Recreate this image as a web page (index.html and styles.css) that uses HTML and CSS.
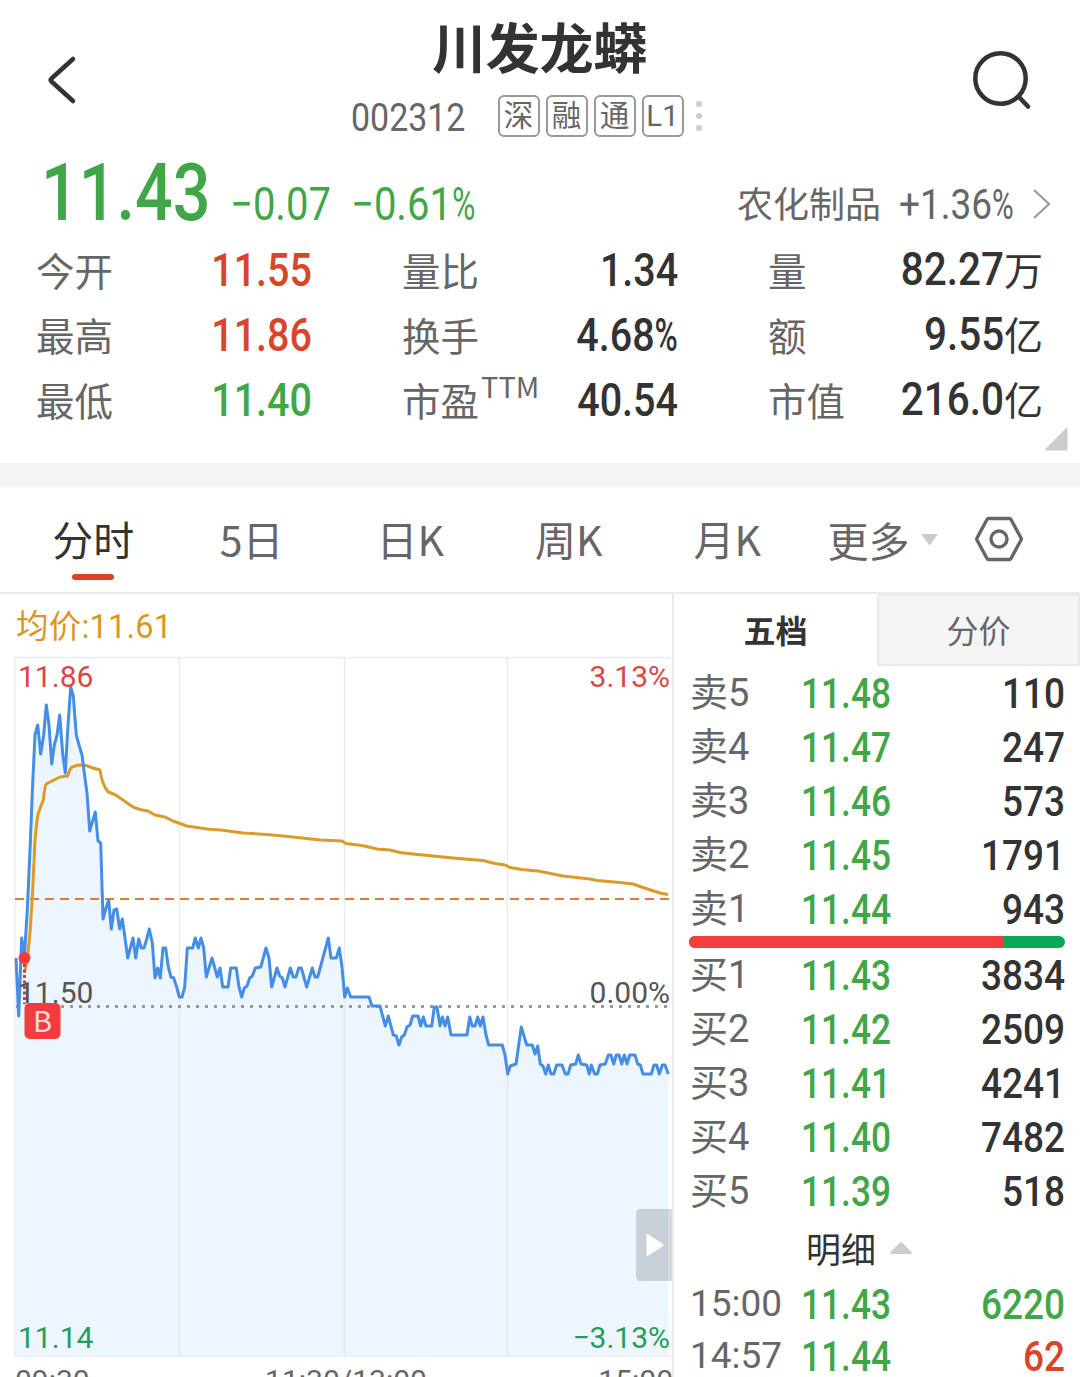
FILE: index.html
```html
<!DOCTYPE html>
<html lang="zh-CN">
<head>
  <meta charset="UTF-8" />
  <meta name="viewport" content="width=device-width, initial-scale=1.0"/>
  <title>川发龙蟒 002312</title>
  <link rel="stylesheet" href="styles.css">
</head>
<body>

<header class="header">
  <svg class="back" width="40" height="56" viewBox="0 0 40 56"><path d="M31 7 L9.500 26.500 Q8 28 9.500 29.500 L31 49"/></svg>
  <div class="stock">
    <h1>川发龙蟒</h1>
    <div class="stock-sub">
      <span class="code"><span class="num">002312</span></span>
      <span class="tag">深</span>
      <span class="tag">融</span>
      <span class="tag">通</span>
      <span class="tag">L1</span>
      <span class="dots"><i></i><i></i><i></i></span>
    </div>
  </div>
  <svg class="search" width="64" height="64" viewBox="0 0 64 64"><circle cx="32.500" cy="30.500" r="25.200"/><path d="M51 49 L60 58.500"/></svg>
</header>

<section class="quote">
  <div class="price-row">
    <span class="price down"><span class="num">11.43</span></span>
    <span class="change down"><span class="num">−0.07</span></span>
    <span class="percent down"><span class="num">−0.61<i class="pct">%</i></span></span>
    <a class="sector">
      <span>农化制品</span>
      <span class="sector-val"><span class="num">+1.36<i class="pct">%</i></span></span>
      <svg width="20" height="32" viewBox="0 0 20 32"><path d="M2 2 L17 16 L2 30"/></svg>
    </a>
  </div>
  <div class="stats">
    <div class="stat"><span>今开</span><b class="num up">11.55</b></div>
    <div class="stat"><span>量比</span><b class="num">1.34</b></div>
    <div class="stat"><span>量</span><b><span class="num">82.27</span><em>万</em></b></div>
    <div class="stat"><span>最高</span><b class="num up">11.86</b></div>
    <div class="stat"><span>换手</span><b class="num">4.68<i class="pct">%</i></b></div>
    <div class="stat"><span>额</span><b><span class="num">9.55</span><em>亿</em></b></div>
    <div class="stat"><span>最低</span><b class="num down">11.40</b></div>
    <div class="stat"><span>市盈<sup>TTM</sup></span><b class="num">40.54</b></div>
    <div class="stat"><span>市值</span><b><span class="num">216.0</span><em>亿</em></b></div>
  </div>
  <svg class="corner" width="24" height="24" viewBox="0 0 24 24"><path d="M23.500 1.500 V22 Q23.500 23.500 22 23.500 H2 Q0 23.500 1.500 22 L22 1 Q23.500 0 23.500 1.500 Z"/></svg>
</section>

<nav class="tabs">
  <a class="tab active">分时</a>
  <a class="tab">5日</a>
  <a class="tab">日K</a>
  <a class="tab">周K</a>
  <a class="tab">月K</a>
  <a class="tab more">更多<svg width="18" height="12" viewBox="0 0 18 12"><path d="M0 0 H17 L8.500 11.500 Z"/></svg></a>
  <svg class="setting" width="50" height="48" viewBox="0 0 50 48"><path d="M14.500 3.500 H35.500 Q36.500 3.500 37 4.500 L47 23 Q47.500 24 47 25 L37 43.500 Q36.500 44.500 35.500 44.500 H14.500 Q13.500 44.500 13 43.500 L3 25 Q2.500 24 3 23 L13 4.500 Q13.500 3.500 14.500 3.500 Z"/><circle cx="25" cy="24" r="8"/></svg>
</nav>

<main class="main">
  <div class="chart">
    <svg width="672" height="783" viewBox="0 594 672 783">
      <!-- price area -->
      <path class="area" d="M16 958 L18.700 1016 21.700 938 24.300 958 27.300 910 30 850 32.700 783 35 735 37.700 725 40.700 754 43.700 735 46.300 705 49 725 51.700 764 54.300 745 57 735 59.700 715 62.700 754 65.300 773 68 725 70.700 687 73.300 696 76.300 735 79 745 82 755 84.300 773 87 793 89.700 831 95.300 812 98 841 100.700 843 103 919 108.700 900 111.300 929 114 910 116.700 909 119.700 929 122.300 919 127.700 958 133 938 135.700 958 138.700 939 141.300 948 144 948 149.300 929 152.300 943 155 978 157.700 968 160.300 978 163 948 165.700 948 168.300 967 171 977 173.700 978 179.300 997 182 997 184.700 987 187.300 948 192.700 948 195.300 938 198.300 948 201 938 203.700 948 206.300 977 212 958 217.300 977 220 968 222.700 987 228 987 230.700 968 236.300 968 241.700 997 244.300 988 247 986 249.700 978 252.300 976 255.300 968 260.700 967 266 948 269 958 271.700 987 277 968 279.700 976 282.300 978 285 987 290.300 968 293.300 977 296 977 298.700 968 301.300 968 306.700 987 312.300 968 315 977 317.700 977 328.300 938 331 958 336.300 958 339.300 948 342 967 344.700 997 347.300 988 350.700 997 369 997 372 1006 380 1006 385.300 1026 388.300 1016 393.300 1035 396.300 1036 399 1045 401.700 1037 404.300 1035 407 1027 410 1025 412.700 1016 418 1016 420.700 1026 423.300 1017 426 1026 431.700 1026 434.300 1007 437 1007 440 1026 442.300 1017 445 1026 447.700 1017 451 1035 467 1035 469.700 1017 472.300 1026 475 1026 477.700 1017 480.300 1026 483 1017 486 1035 488.700 1045 502.300 1045 505 1055 507.700 1074 510.300 1066 516 1064 518.700 1045 521.300 1027 526.700 1045 532.300 1045 535 1054 537.700 1046 540.300 1064 543 1066 545.700 1074 548.300 1065 551 1074 553.700 1074 556.700 1065 562 1065 565.300 1074 568 1074 570.700 1065 575.700 1064 578.300 1055 581 1064 586.700 1065 589.300 1074 591.300 1065 594.700 1074 597.300 1074 600 1065 605.300 1064 608.300 1055 611 1055 613.700 1064 616.300 1055 619 1055 621.700 1064 624.300 1055 627 1064 629.700 1055 635 1055 637.700 1064 640.300 1065 643 1074 651.300 1074 654 1065 656.700 1065 659.300 1074 662.300 1065 665 1065 668.300 1074 V1355 H16 Z"/>
      <!-- grid -->
      <path class="grid" d="M14 657.500 H671 M15 657 V1356 M179.500 657 V1356 M344.500 657 V1356 M507.500 657 V1356 M14 1356 H672"/>
      <path class="dotted" d="M16 1006.500 H668"/>
      <path class="dashed" d="M15 899 H669"/>
      <path class="avg" d="M24.300 973 L27 962 30 933 32.700 890 35 840 Q37 818 38.300 813 L43.300 800 Q45 785 46.300 784 L50 782 60 777 67.700 776 Q70 768 72.300 767 L78.300 765 86 765.500 93 768 100 770 Q102 785 108.300 792 L115.700 795 123 800 133 807 140 809.500 148 811 155 815 165 817 173 821 187 826 207 829 223 830.300 243 833 267 834.500 293 837 320 840 342 841 346 843.500 362 845.500 377 849 390 850 400 852.500 413 854 453 858 483 860.500 495 863.500 505 865 510 867.500 522 869.500 538 871 563 876 590 879 597 880.500 620 882.500 633 884 643 887.500 660 893 668 894.500"/>
      <path class="line" d="M16 958 L18.700 1016 21.700 938 24.300 958 27.300 910 30 850 32.700 783 35 735 37.700 725 40.700 754 43.700 735 46.300 705 49 725 51.700 764 54.300 745 57 735 59.700 715 62.700 754 65.300 773 68 725 70.700 687 73.300 696 76.300 735 79 745 82 755 84.300 773 87 793 89.700 831 95.300 812 98 841 100.700 843 103 919 106 908 108.700 900 111.300 929 114 910 116.700 909 119.700 929 122.300 919 125 938 127.700 958 133 938 135.700 958 138.700 939 141.300 948 144 948 146.700 939 149.300 929 152.300 943 155 978 157.700 968 160.300 978 163 948 165.700 948 168.300 967 171 977 173.700 978 176.700 987 179.300 997 182 997 184.700 987 187.300 948 192.700 948 195.300 938 198.300 948 201 938 203.700 948 206.300 977 212 958 217.300 977 220 968 222.700 987 228 987 230.700 968 236.300 968 239 987 241.700 997 244.300 988 247 986 249.700 978 252.300 976 255.300 968 260.700 967 263.300 958 266 948 269 958 271.700 987 277 968 279.700 976 282.300 978 285 987 290.300 968 293.300 977 296 977 298.700 968 301.300 968 306.700 987 312.300 968 315 977 317.700 977 328.300 938 331 958 336.300 958 339.300 948 342 967 344.700 997 347.300 988 350.700 997 369 997 372 1006 380 1006 385.300 1026 388.300 1016 393.300 1035 396.300 1036 399 1045 401.700 1037 404.300 1035 407 1027 410 1025 412.700 1016 418 1016 420.700 1026 423.300 1017 426 1026 431.700 1026 434.300 1007 437 1007 440 1026 442.300 1017 445 1026 447.700 1017 451 1035 467 1035 469.700 1017 472.300 1026 475 1026 477.700 1017 480.300 1026 483 1017 486 1035 488.700 1045 502.300 1045 505 1055 507.700 1074 510.300 1066 516 1064 518.700 1045 521.300 1027 526.700 1045 532.300 1045 535 1054 537.700 1046 540.300 1064 543 1066 545.700 1074 548.300 1065 551 1074 553.700 1074 556.700 1065 562 1065 565.300 1074 568 1074 570.700 1065 575.700 1064 578.300 1055 581 1064 586.700 1065 589.300 1074 591.300 1065 594.700 1074 597.300 1074 600 1065 605.300 1064 608.300 1055 611 1055 613.700 1064 616.300 1055 619 1055 621.700 1064 624.300 1055 627 1064 629.700 1055 635 1055 637.700 1064 640.300 1065 643 1074 651.300 1074 654 1065 656.700 1065 659.300 1074 662.300 1065 665 1065 668.300 1074"/>
      <!-- buy point -->
      <path class="buy-line" d="M24.500 964 V1004"/>
      <circle class="buy" cx="24.500" cy="958" r="6"/>
      <g class="axis">
        <text class="avg-text" x="16" y="638">均价:11.61</text>
        <text class="red" x="18" y="687">11.86</text>
        <text class="red" x="670" y="687" text-anchor="end">3.13%</text>
        <text x="18" y="1003">11.50</text>
        <text x="670" y="1003" text-anchor="end">0.00%</text>
        <text class="green" x="18" y="1348">11.14</text>
        <text class="green" x="670" y="1348" text-anchor="end">−3.13%</text>
        <text class="time" x="15" y="1391">09:30</text>
        <text class="time" x="346" y="1391" text-anchor="middle">11:30/13:00</text>
        <text class="time" x="673" y="1391" text-anchor="end">15:00</text>
      </g>
      <rect class="buy" x="24.500" y="1003" width="36" height="36" rx="5"/>
      <text class="buy-text" x="42.500" y="1032" text-anchor="middle">B</text>
      <!-- expand handle -->
      <path class="handle" d="M672 1209 H641 Q636 1209 636 1214 V1276 Q636 1281 641 1281 H672 Z"/>
      <path class="play" d="M646.500 1235 Q646.500 1233 648.500 1234.500 L663 1244 Q664 1245 663 1246 L648.500 1255.500 Q646.500 1257 646.500 1255 Z"/>
    </svg>
  </div>

  <div class="book">
    <div class="book-tabs">
      <a class="active">五档</a>
      <a>分价</a>
    </div>
    <div class="orders">
      <div class="order"><span>卖5</span><b class="num down">11.48</b><b class="num">110</b></div>
      <div class="order"><span>卖4</span><b class="num down">11.47</b><b class="num">247</b></div>
      <div class="order"><span>卖3</span><b class="num down">11.46</b><b class="num">573</b></div>
      <div class="order"><span>卖2</span><b class="num down">11.45</b><b class="num">1791</b></div>
      <div class="order"><span>卖1</span><b class="num down">11.44</b><b class="num">943</b></div>
    </div>
    <div class="ratio"><i style="width: 83.6%"></i></div>
    <div class="orders">
      <div class="order"><span>买1</span><b class="num down">11.43</b><b class="num">3834</b></div>
      <div class="order"><span>买2</span><b class="num down">11.42</b><b class="num">2509</b></div>
      <div class="order"><span>买3</span><b class="num down">11.41</b><b class="num">4241</b></div>
      <div class="order"><span>买4</span><b class="num down">11.40</b><b class="num">7482</b></div>
      <div class="order"><span>买5</span><b class="num down">11.39</b><b class="num">518</b></div>
    </div>
    <div class="detail-title">明细<svg width="22" height="12" viewBox="0 0 22 12"><path d="M1 12 Q-.5 11 1 9.500 L9.500 1 Q11 -.5 12.500 1 L21 9.500 Q22.500 11 21 12 Z"/></svg></div>
    <div class="details">
      <div class="order"><span>15:00</span><b class="num down">11.43</b><b class="num down">6220</b></div>
      <div class="order"><span>14:57</span><b class="num down">11.44</b><b class="num up">62</b></div>
    </div>
  </div>
</main>

</body>
</html>
```
FILE: styles.css
```css
* { box-sizing: border-box; margin: 0; padding: 0; }
body {
  width: 1080px;
  height: 1377px;
  overflow: hidden;
  background-color: #fff;
  font-family: "Noto Sans CJK SC", "Noto Sans", sans-serif;
  color: #333;
}
i, em { font-style: normal; }
svg { display: block; fill: none; }
b { font-weight: 500; }
.up { color: #d8452a; }
.down { color: #41a648; }
/* narrow figures */
.num {
  display: inline-block;
  font-family: Roboto, "Noto Sans CJK SC", sans-serif;
  font-weight: 500;
  white-space: nowrap;
  transform: scaleX(.86);
  transform-origin: right;
}
.pct {
  display: inline-block;
  transform: scaleX(.8);
  transform-origin: left;
  margin-right: -.15em;
}

.header {
  height: 150px;
  display: flex;
  justify-content: space-between;
  padding: 0 48px 0 42px;
}
.back { margin-top: 52px; stroke: #333; stroke-width: 4.5; stroke-linecap: round; }
.search { margin-top: 48px; stroke: #333; stroke-width: 4.5; stroke-linecap: round; }
.stock {
  width: 360px;
  margin-left: 9px;
  padding-top: 16px;
}
h1 {
  font-size: 54px;
  line-height: 60px;
  letter-spacing: -.3px;
  text-align: center;
  margin-left: 20px;
}
.stock-sub {
  display: flex;
  align-items: center;
  gap: 6px;
  margin-top: 19px;
  height: 42px;
  color: #666;
}
.code {
  width: 142px;
  padding-left: 1px;
  font-size: 39px;
  line-height: 38px;
}
.code .num, .price-row .num { transform-origin: left; }
.code .num { font-weight: 400; line-height: 38px; transform: scaleX(.87); }
.tag {
  width: 42px;
  height: 42px;
  border: 2px solid #999;
  border-radius: 6px;
  font-family: Roboto, "Noto Sans CJK SC", sans-serif;
  font-size: 29.500px;
  line-height: 39px;
  text-align: center;
}
.dots {
  display: flex;
  flex-direction: column;
  gap: 6px;
  margin-left: 6px;
}
.dots i { width: 6px; height: 6px; border-radius: 50%; background: #ccc; }

.quote {
  height: 313px;
  position: relative;
}
.price-row {
  display: flex;
  height: 88px;
  padding-left: 41px;
}
.price-row > span { font-family: Roboto, sans-serif; }
.price { width: 189px; font-size: 80px; line-height: 86px; }
.price .num { transform: scaleX(.83); }
.change, .percent { font-size: 46px; line-height: 109px; }
.change .num, .percent .num { font-weight: 400; transform: scaleX(.87); }
.change { width: 121px; }
.sector {
  display: flex;
  align-items: center;
  width: 315px;
  height: 104px;
  margin-left: auto;
  margin-right: 28px;
  font-size: 36px;
  color: #666;
}
.sector > span:first-child { width: 164px; }
.sector-val { width: 134px; padding-top: 4px; font-family: Roboto, sans-serif; font-size: 43px; }
.sector-val .num { font-weight: 400; }
.sector svg { stroke: #999; stroke-width: 2.2; margin-left: auto; margin-top: 4px; flex: none; }
.stats {
  display: grid;
  grid-template-columns: 276px 276px 275px;
  grid-auto-rows: 65px;
  column-gap: 90px;
  padding-left: 36px;
}
.stat {
  display: flex;
  justify-content: space-between;
  align-items: center;
  white-space: nowrap;
}
.stat > span { font-size: 38.500px; line-height: 60px; padding-bottom: 3px; color: #666; }
.stat b {
  font-family: Roboto, "Noto Sans CJK SC", sans-serif;
  font-size: 47px;
  line-height: 60px;
}
.stat > .num { transform: scaleX(.84); padding-bottom: 2px; }
.stat em { font-size: 39px; font-weight: 400; }
.stat sup { font-size: 29px; line-height: 1; vertical-align: 18px; margin-left: 2px; }
.corner { position: absolute; right: 12px; bottom: 12px; fill: #ccc; }

.tabs {
  height: 131px;
  border-top: 24px solid #f4f4f4;
  border-bottom: 2px solid #eaeaea;
  display: flex;
  padding-left: 14px;
}
.tab {
  width: 158.500px;
  font-size: 41px;
  line-height: 103px;
  text-align: center;
  color: #666;
}
.tab.active { color: #333; }
.tab.active::after {
  content: "";
  display: block;
  width: 42px;
  height: 6px;
  margin: -16px auto 0;
  border-radius: 3px;
  background: #de4226;
}
.tab.more {
  width: 132px;
  display: flex;
  align-items: center;
  margin-left: 21px;
}
.tab.more svg { fill: #ccc; margin-left: 11px; }
.setting { stroke: #666; stroke-width: 3.4; margin: 28px 0 0 14px; }

.main { display: flex; height: 783px; }
.chart { width: 674px; border-right: 2px solid #eaeaea; }
.area { fill: #edf5fe; }
.grid { stroke: #dfe4ea; stroke-opacity: .7; stroke-width: 1.5; }
.dotted { stroke: #999; stroke-width: 3; stroke-dasharray: 3 6; }
.dashed { stroke: #e07a3a; stroke-width: 2.2; stroke-dasharray: 9 6; }
.avg { stroke: #dc9a28; stroke-width: 3; stroke-linejoin: round; }
.line { stroke: #458ee5; stroke-width: 3; stroke-linejoin: round; }
.buy { fill: #f43c3e; }
.buy-line { stroke: #d23a4a; stroke-width: 3; stroke-dasharray: 3 2.5; }
.buy-text { font-size: 29px; fill: #ffdcdc; }
.axis {
  font-family: Roboto, "Noto Sans CJK SC", sans-serif;
  font-size: 30px;
  fill: #555;
}
.axis .avg-text { font-size: 32.500px; letter-spacing: .2px; fill: #db9722; }
.axis .red { fill: #d94747; }
.axis .green { fill: #1f9f5a; }
.axis .time { fill: #666; }
.handle { fill: #000; fill-opacity: .15; }
.play { fill: #fff; }

.book { width: 406px; }
.book-tabs {
  display: flex;
  height: 72px;
  font-size: 32px;
  line-height: 70px;
  text-align: center;
}
.book-tabs a { width: 203px; color: #666; }
.book-tabs a.active { color: #333; font-weight: 700; }
.book-tabs a:not(.active) {
  background: #f4f4f4;
  border: 2px solid #eaeaea;
  line-height: 66px;
}
.orders { height: 270px; }
.order {
  display: grid;
  grid-template-columns: 111px 91px 1fr;
  height: 54px;
  padding: 0 15px 0 16px;
  line-height: 54px;
}
.order span {
  font-family: Roboto, "Noto Sans CJK SC", sans-serif;
  font-size: 38px;
  color: #666;
}
.order b { font-size: 43px; text-align: right; }
.order b:nth-child(2) {
  text-align: left;
  transform: scaleX(.82);
  transform-origin: left;
}
.ratio {
  height: 12px;
  margin: 0 15px;
  border-radius: 6px;
  overflow: hidden;
  background: #0aa858;
}
.ratio i { display: block; height: 12px; background: #f53d3d; }
.detail-title {
  display: flex;
  align-items: center;
  height: 60px;
  padding-left: 132px;
  font-size: 35px;
  line-height: 56px;
}
.detail-title svg { fill: #ccc; margin-left: 14px; }
.details .order { height: 52px; line-height: 52px; }
.details .order span { font-size: 37px; }
```
